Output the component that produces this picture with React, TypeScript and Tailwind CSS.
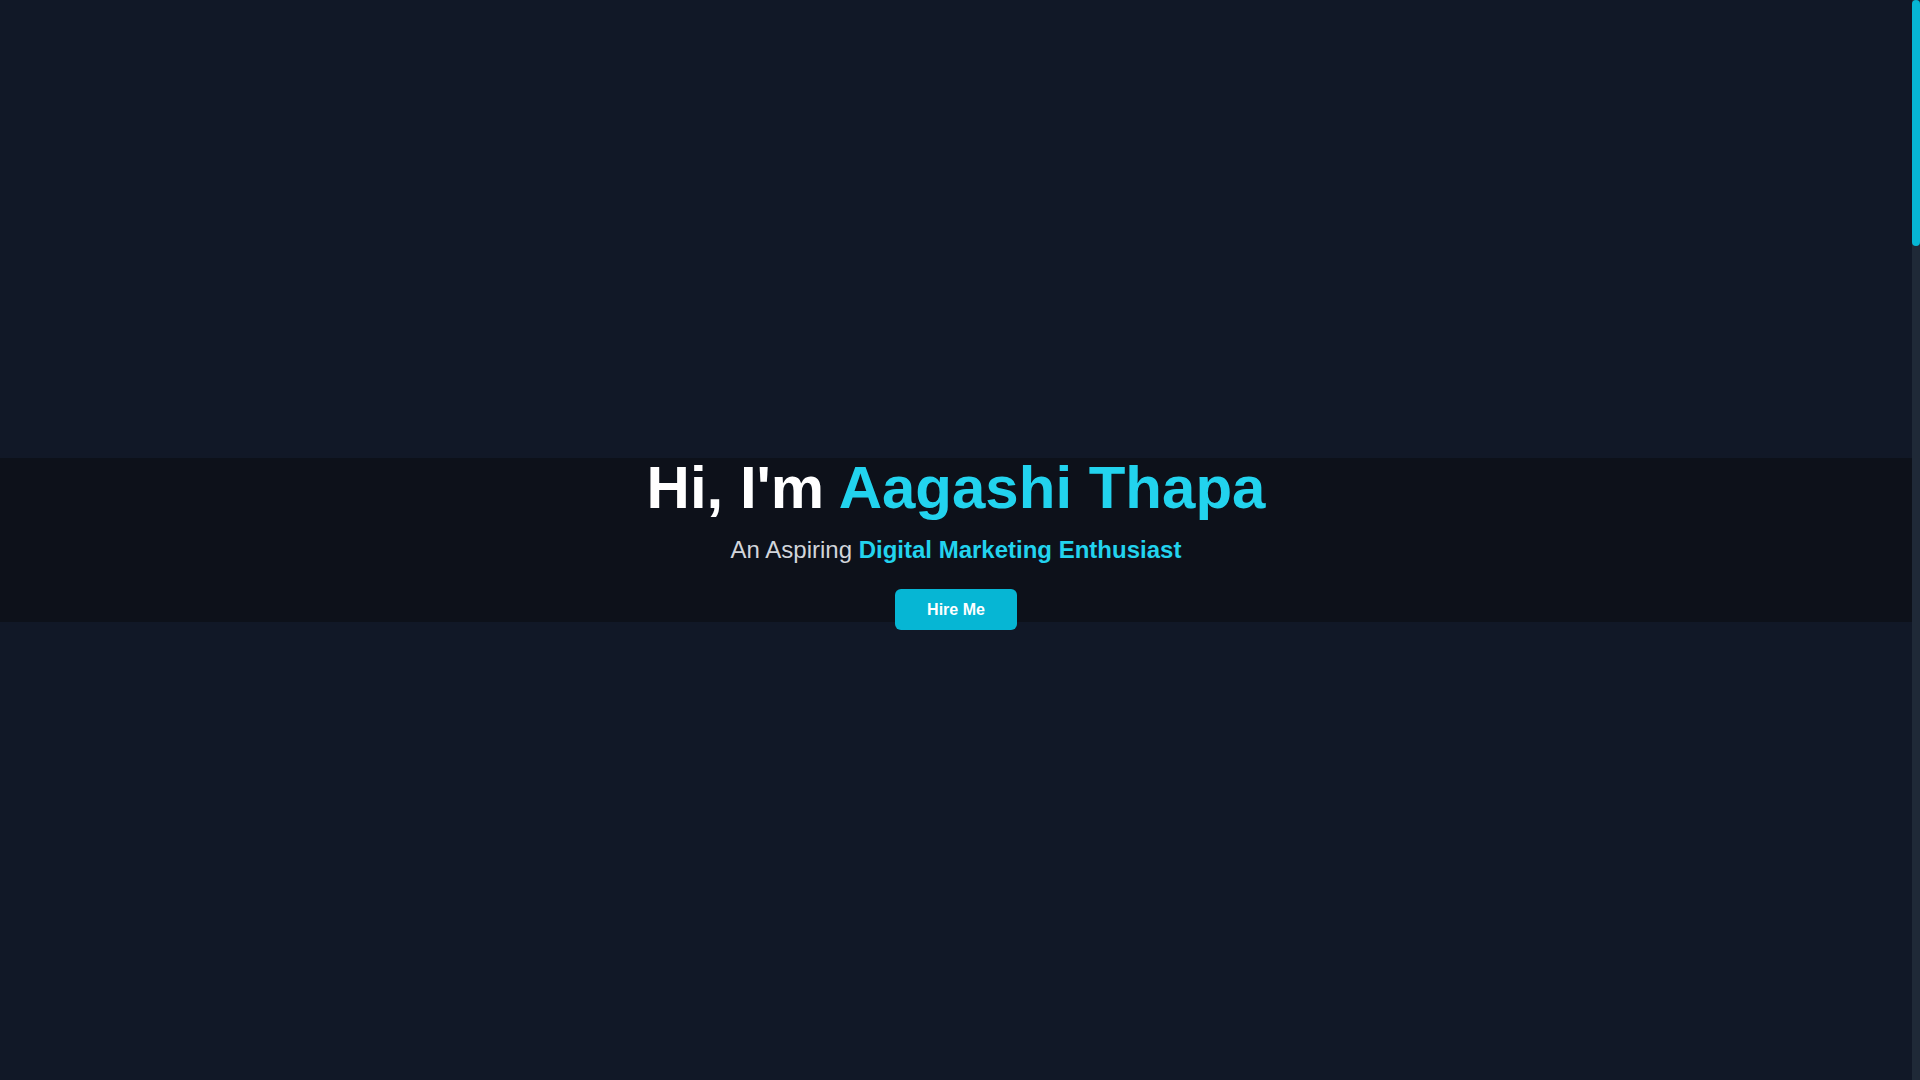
import React from "react";

export default function App() {
  return (
    <div className="h-screen flex bg-[#111827] font-['Liberation_Sans',Arial,sans-serif] text-white">
      <main className="flex-1 min-w-0 overflow-hidden">
        {/* Hero */}
        <section className="h-screen flex items-center justify-center">
          <div className="w-full h-[164px] bg-[#0d111a] flex flex-col items-center text-center">
            <h1 className="text-6xl font-bold leading-none">
              Hi, I'm <span className="text-[#22d3ee]">Aagashi Thapa</span>
            </h1>
            <p className="mt-4 text-2xl leading-8 text-[#d1d5db]">
              An Aspiring{" "}
              <span className="font-bold text-[#22d3ee]">
                Digital Marketing Enthusiast
              </span>
            </p>
            <button className="mt-[23px] shrink-0 px-8 h-[41px] rounded-md bg-[#06b6d4] text-white font-bold text-base">
              Hire Me
            </button>
          </div>
        </section>
      </main>

      {/* Custom scrollbar */}
      <div className="w-2 shrink-0 bg-[#1f2937]">
        <div className="h-[246px] rounded-full bg-[#06b6d4]" />
      </div>
    </div>
  );
}
